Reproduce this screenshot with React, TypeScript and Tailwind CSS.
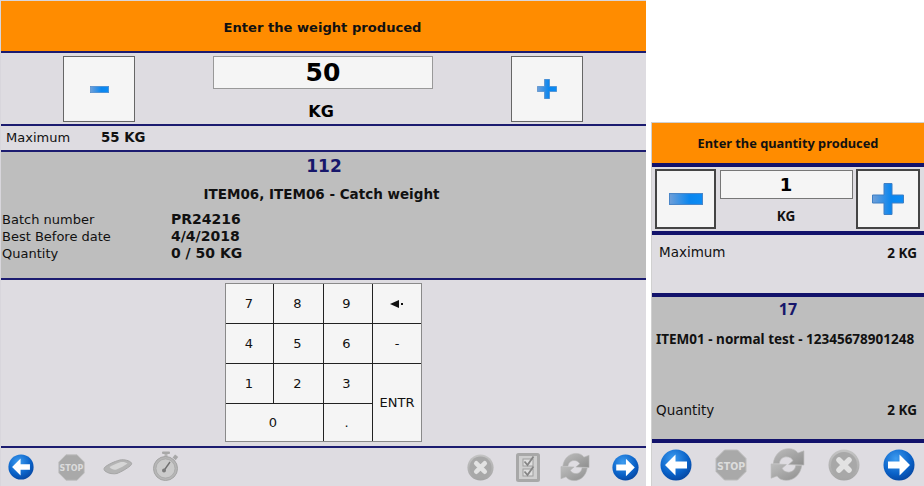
import React from "react";

const font = { fontFamily: '"DejaVu Sans", Verdana, sans-serif' };

function Defs() {
  return (
    <svg width="0" height="0" className="absolute">
      <defs>
        <linearGradient id="barG" x1="0" x2="1" y1="0" y2="0">
          <stop offset="0" stopColor="#6f9fd8" />
          <stop offset="0.6" stopColor="#0a86ef" />
          <stop offset="1" stopColor="#0b8cf5" />
        </linearGradient>
        <radialGradient id="blueG" cx="0.4" cy="0.3" r="0.8">
          <stop offset="0" stopColor="#3d9cf0" />
          <stop offset="0.6" stopColor="#0a62c8" />
          <stop offset="1" stopColor="#063f96" />
        </radialGradient>
        <linearGradient id="greyG" x1="0" x2="0" y1="0" y2="1">
          <stop offset="0" stopColor="#c4c4c4" />
          <stop offset="1" stopColor="#a4a4a4" />
        </linearGradient>
        <linearGradient id="syncG" x1="0" x2="1" y1="0" y2="1">
          <stop offset="0" stopColor="#bdbdbd" />
          <stop offset="1" stopColor="#8f8f8f" />
        </linearGradient>
      </defs>
    </svg>
  );
}

function Minus({ w, h }: { w: number; h: number }) {
  return (
    <svg width={w} height={h} viewBox="0 0 34 11" preserveAspectRatio="none">
      <rect x="0.5" y="0.5" width="33" height="10" fill="url(#barG)" stroke="#4a86c8" />
    </svg>
  );
}

function Plus({ s }: { s: number }) {
  return (
    <svg width={s} height={s} viewBox="0 0 32 32">
      <path d="M12 .5h8v11.5h11.5v8H20v11.5h-8V20H.5v-8H12z" fill="url(#barG)" stroke="#3f7fc4" />
    </svg>
  );
}

function Arrow({ s, dir }: { s: number; dir: "l" | "r" }) {
  return (
    <svg width={s} height={s} viewBox="0 0 32 32">
      <circle cx="16" cy="16" r="15.5" fill="url(#blueG)" />
      <path
        d={dir === "l" ? "M5 16 15.500 5.500v7H27v7H15.500v7z" : "M27 16 16.500 5.500v7H5v7h11.500v7z"}
        fill="#fff"
      />
    </svg>
  );
}

function Stop({ s }: { s: number }) {
  return (
    <svg width={s} height={s} viewBox="0 0 32 32">
      <path d="M9.500 1h13L31 9.500v13L22.500 31h-13L1 22.500v-13z" fill="#a9a9a9" stroke="#bcbcbc" />
      <text x="16" y="20.500" textAnchor="middle" fontSize="10.500" fontWeight="700" fill="#dcdcdc" fontFamily='"DejaVu Sans Condensed","DejaVu Sans",sans-serif'>
        STOP
      </text>
    </svg>
  );
}

function Cancel({ s }: { s: number }) {
  return (
    <svg width={s} height={s} viewBox="0 0 32 32">
      <circle cx="16" cy="16" r="15.500" fill="url(#greyG)" />
      <circle cx="16" cy="16" r="13" fill="#a8a8a8" />
      <path d="M11 11l10 10M21 11 11 21" stroke="#e2e2e2" strokeWidth="5.500" strokeLinecap="round" />
    </svg>
  );
}

function Sync({ s }: { s: number }) {
  return (
    <svg width={s} height={s} viewBox="0 0 32 32">
      <path d="M3 15C4 7 10 1.500 17 1.500c4 0 7 1.500 8.500 4l5.500-2v13l-14-.5 4-3.500c-1-2-3-3.500-6-3.500-3.500 0-6 2.500-6.500 6z" fill="url(#syncG)" stroke="#b8b8b8" strokeWidth=".6" />
      <path d="M29 17c-1 8-7 13.500-14 13.500-4 0-7-1.500-8.500-4l-5.500 2v-13l14 .5-4 3.500c1 2 3 3.500 6 3.500 3.500 0 6-2.500 6.500-6z" fill="url(#syncG)" stroke="#b8b8b8" strokeWidth=".6" />
    </svg>
  );
}

function Pda() {
  return (
    <svg width="30" height="16" viewBox="0 0 30 16">
      <path d="M1.500 8.500C4 6 11 2.500 17 1c4-.8 10 .6 11.500 3 .5 1-.3 2-1.500 3-3 2.500-9 6-13 7.500-3 .8-9 .2-12-2.500-1-1-1.300-2-.5-3.500z" fill="#b4b4b4" stroke="#a6a6a6" />
      <path d="M6.500 8C10 6 14 4 18 3c2.500-.3 5 .3 6.500 1.500C21 7 17 9 13.500 10.500c-2.500.5-5 0-7-2.500z" fill="#d6d6d6" />
    </svg>
  );
}

function Watch() {
  return (
    <svg width="26" height="30" viewBox="0 0 26 30">
      <rect x="9" y="0.500" width="8" height="2.500" rx="1" fill="#a8a8a8" />
      <rect x="11.500" y="3" width="3" height="3" fill="#b5b5b5" />
      <rect x="20.500" y="4" width="4" height="4" transform="rotate(40 22 6)" fill="#a8a8a8" />
      <circle cx="12.500" cy="17.500" r="12" fill="#b6b6b6" stroke="#a4a4a4" />
      <circle cx="12.500" cy="17.500" r="9.500" fill="#cbcbcb" stroke="#a0a0a0" strokeWidth=".6" />
      <path d="M11 19.500 17 11" stroke="#6f6f6f" strokeWidth="1.400" />
      <circle cx="11" cy="19.500" r="2" fill="#7b7b7b" />
    </svg>
  );
}

function Checklist() {
  return (
    <svg width="24" height="29" viewBox="0 0 24 29">
      <rect x="1.500" y="1.500" width="21" height="26" rx="1" fill="#cfcfcf" stroke="#a8a8a8" strokeWidth="3" />
      <rect x="7" y="6" width="10" height="7" fill="#dedede" stroke="#9e9e9e" />
      <rect x="7" y="16" width="10" height="7" fill="#dedede" stroke="#9e9e9e" />
      <path d="M8.500 8.500l3 3.500 6-8.500M8.500 18.500l3 3.500 6-8.500" fill="none" stroke="#858585" strokeWidth="1.800" />
    </svg>
  );
}

function Key({ children, className = "pr-[2px]" }: { children: React.ReactNode; className?: string }) {
  return (
    <div className={"flex items-center justify-center bg-[#f5f5f5] text-[13px] text-[#111] " + className}>
      {children}
    </div>
  );
}

function Backspace() {
  return (
    <svg width="14" height="8" viewBox="0 0 14 8" fill="#111">
      <path d="M0 4 9 0v8z" />
      <rect x="11" y="3" width="2" height="2" />
    </svg>
  );
}

function Keypad() {
  return (
    <div className="grid w-[197px] h-[159px] grid-cols-[47px_49px_48px_1fr] grid-rows-[39px_39px_39px_1fr] gap-px bg-[#222] border border-[#8a8a8a]">
      <Key className="pr-[1px]">7</Key>
      <Key>8</Key>
      <Key className="pr-[3px]">9</Key>
      <Key className="">
        <Backspace />
      </Key>
      <Key className="pr-[1px]">4</Key>
      <Key>5</Key>
      <Key className="pr-[3px]">6</Key>
      <Key className="">-</Key>
      <Key className="pr-[1px]">1</Key>
      <Key>2</Key>
      <Key className="pr-[3px]">3</Key>
      <Key className="row-span-2">ENTR</Key>
      <Key className="col-span-2 pr-[3px]">0</Key>
      <Key className="pr-[3px]">.</Key>
    </div>
  );
}

function LeftPanel() {
  return (
    <div className="flex h-[486px] w-[646px] shrink-0 flex-col border-l border-t border-[#d8d6dc] bg-[#dedce1] text-[#111]">
      <div className="flex h-[52px] shrink-0 items-center justify-center border-b-2 border-[#1c1c70] bg-[#ff8c00] pr-[2px] pt-[3px] text-[13.100px] font-bold text-[#111]">
        Enter the weight produced
      </div>
      <div className="flex h-[73px] shrink-0 items-start border-b-2 border-[#1c1c70] pl-[62px] pt-[3px]">
        <div className="flex h-[66px] w-[72px] items-center justify-center border border-[#666] bg-[#f5f5f5]">
          <Minus w={19} h={7} />
        </div>
        <div className="ml-[78px] flex w-[220px] flex-col items-center">
          <div className="flex h-[33px] w-full items-center justify-center border border-[#999] bg-[#f5f5f5] text-[25px] font-bold text-black">
            50
          </div>
          <div className="mt-[13px] pr-[4px] text-[16px] font-bold leading-[20px] text-black">KG</div>
        </div>
        <div className="ml-[78px] flex h-[66px] w-[72px] items-center justify-center border border-[#666] bg-[#f5f5f5]">
          <Plus s={20} />
        </div>
      </div>
      <div className="flex h-[26px] shrink-0 items-center border-b-2 border-[#1c1c70] pl-[5px] text-[13px]">
        <span className="w-[95px]">Maximum</span>
        <span className="text-[13.300px] font-bold">55 KG</span>
      </div>
      <div className="flex h-[128px] shrink-0 flex-col border-b-2 border-[#1c1c70] bg-[#bebebe] pl-[1px] pt-[3px]">
        <div className="text-center text-[17px] font-bold leading-[22px] text-[#17176b]">112</div>
        <div className="mt-[9px] pr-[5px] text-center text-[13.500px] font-bold leading-[16px]">
          ITEM06, ITEM06 - Catch weight
        </div>
        <div className="mt-[9px] grid grid-cols-[169px_1fr] text-[13px] leading-[17px]">
          <span>Batch number</span>
          <span className="text-[14px] font-bold">PR24216</span>
          <span>Best Before date</span>
          <span className="text-[14px] font-bold">4/4/2018</span>
          <span>Quantity</span>
          <span className="text-[14px] font-bold">0 / 50 KG</span>
        </div>
      </div>
      <div className="flex h-[168px] shrink-0 justify-center border-b-2 border-[#1c1c70] pt-[3px]">
        <Keypad />
      </div>
      <div className="flex flex-1 items-center pl-[7px] pr-[7px]">
        <Arrow s={26} dir="l" />
        <div className="ml-[24px]"><Stop s={27} /></div>
        <div className="ml-[18px]"><Pda /></div>
        <div className="ml-[20px] -mt-[2px]"><Watch /></div>
        <div className="ml-auto"><Cancel s={27} /></div>
        <div className="ml-[22px]"><Checklist /></div>
        <div className="ml-[20px]"><Sync s={30} /></div>
        <div className="ml-[22px]"><Arrow s={27} dir="r" /></div>
      </div>
    </div>
  );
}

function RightPanel() {
  const cond = { fontFamily: '"Noto Sans", "DejaVu Sans Condensed", sans-serif' };
  return (
    <div className="ml-[5px] flex h-[364px] w-[273px] shrink-0 flex-col border-l border-t border-[#d0d0d0] bg-[#dedce1] text-[#111]">
      <div style={cond} className="flex h-[44px] shrink-0 items-center justify-center border-b-[4px] border-[#12126b] bg-[#ff8c00] pt-[2px] text-[12.800px] font-bold">
        Enter the quantity produced
      </div>
      <div className="flex h-[68px] shrink-0 items-start justify-between border-b-[4px] border-[#12126b] pl-[3px] pr-[4px] pt-[2px]">
        <div className="flex h-[60px] w-[61px] items-center justify-center border-2 border-[#444] bg-[#f5f5f5]">
          <Minus w={34} h={12} />
        </div>
        <div className="flex w-[133px] flex-col items-center pt-[1px]">
          <div className="flex h-[29px] w-full items-center justify-center border border-[#777] bg-[#f5f5f5] text-[18px] font-bold text-black">
            1
          </div>
          <div style={cond} className="mt-[9px] text-[13.500px] font-bold leading-[16px]">KG</div>
        </div>
        <div className="flex h-[60px] w-[64px] items-center justify-center border-2 border-[#444] bg-[#f5f5f5]">
          <Plus s={32} />
        </div>
      </div>
      <div className="flex h-[62px] shrink-0 items-start justify-between border-b-[4px] border-[#12126b] pl-[7px] pr-[7px] pt-[7px] text-[13.500px]">
        <span>Maximum</span>
        <span style={cond} className="mt-[1px] font-bold">2 KG</span>
      </div>
      <div className="flex h-[146px] shrink-0 flex-col border-b-[4px] border-[#12126b] bg-[#bebebe] px-[4px] pt-[2px]">
        <div className="text-center text-[16px] font-bold leading-[20px] text-[#17176b]" style={cond}>17</div>
        <div style={cond} className="mt-[12px] text-[13.500px] font-bold leading-[16px] whitespace-nowrap">
          ITEM01 - normal test - 12345678901248
        </div>
        <div className="mt-auto mb-[19px] flex items-center justify-between pr-[3px] text-[13.500px]">
          <span>Quantity</span>
          <span style={cond} className="font-bold">2 KG</span>
        </div>
      </div>
      <div className="flex flex-1 items-center justify-between pl-[8px] pr-[9px]">
        <Arrow s={32} dir="l" />
        <Stop s={32} />
        <Sync s={35} />
        <Cancel s={32} />
        <Arrow s={32} dir="r" />
      </div>
    </div>
  );
}

export default function App() {
  return (
    <div style={font} className="flex h-[486px] w-[924px] items-end overflow-hidden bg-white">
      <Defs />
      <LeftPanel />
      <RightPanel />
    </div>
  );
}
